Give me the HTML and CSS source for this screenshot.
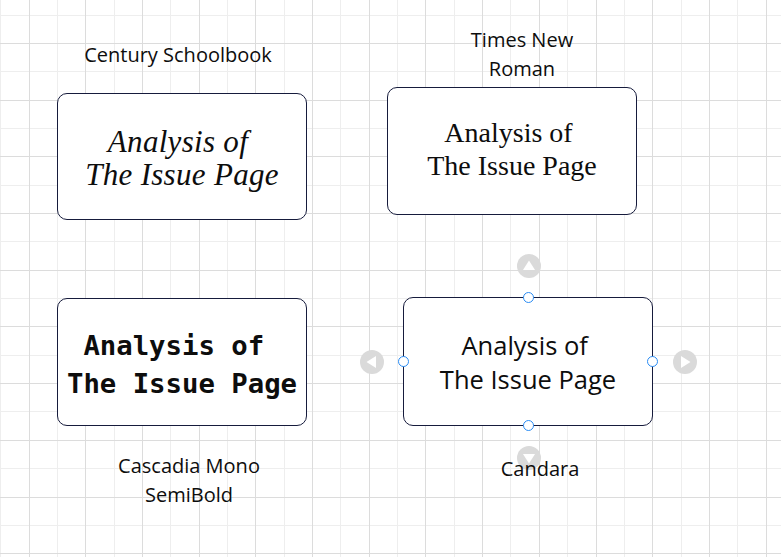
FILE: index.html
```html
<!DOCTYPE html>
<html lang="en">
<head>
<meta charset="utf-8">
<title>Font samples</title>
<link rel="stylesheet" href="styles.css">
</head>
<body>
<div class="canvas">
  <svg class="grid" width="781" height="557" viewBox="0 0 781 557">
    <path class="minor" d="M0.5 0V557M57.5 0V557M114.5 0V557M170.5 0V557M227.5 0V557M284.5 0V557M340.5 0V557M397.5 0V557M454.5 0V557M510.5 0V557M567.5 0V557M624.5 0V557M681.5 0V557M737.5 0V557M0 15.5H781M0 71.5H781M0 128.5H781M0 185.5H781M0 241.5H781M0 298.5H781M0 355.5H781M0 411.5H781M0 468.5H781M0 525.5H781"/>
    <path class="major" d="M29.5 0V557M85.5 0V557M142.5 0V557M199.5 0V557M255.5 0V557M312.5 0V557M369.5 0V557M425.5 0V557M482.5 0V557M539.5 0V557M596.5 0V557M652.5 0V557M709.5 0V557M766.5 0V557M0 43.5H781M0 100.5H781M0 156.5H781M0 213.5H781M0 270.5H781M0 326.5H781M0 383.5H781M0 440.5H781M0 497.5H781M0 553.5H781"/>
  </svg>

  <div class="label label-century">Century Schoolbook</div>
  <div class="label label-times">Times New<br>Roman</div>
  <div class="label label-cascadia">Cascadia Mono<br>SemiBold</div>

  <div class="node node-century"><div class="txt">Analysis of&nbsp;<br>The Issue Page</div></div>
  <div class="node node-times"><div class="txt">Analysis of&nbsp;<br>The Issue Page</div></div>
  <div class="node node-cascadia"><div class="txt">Analysis of&nbsp;<br>The Issue Page</div></div>
  <div class="node node-candara"><div class="txt">Analysis of&nbsp;<br>The Issue Page</div></div>

  <svg class="arrow arrow-up" width="24" height="24" viewBox="0 0 24 24"><circle cx="12" cy="12" r="12"/><path d="M12 6.5L18 16H6Z"/></svg>
  <svg class="arrow arrow-down" width="24" height="24" viewBox="0 0 24 24"><circle cx="12" cy="12" r="12"/><path d="M12 17.5L18 8H6Z"/></svg>
  <svg class="arrow arrow-left" width="24" height="24" viewBox="0 0 24 24"><circle cx="12" cy="12" r="12"/><path d="M6.5 12L16 6V18Z"/></svg>
  <svg class="arrow arrow-right" width="24" height="24" viewBox="0 0 24 24"><circle cx="12" cy="12" r="12"/><path d="M17.5 12L8 6V18Z"/></svg>

  <span class="handle handle-top"></span>
  <span class="handle handle-bottom"></span>
  <span class="handle handle-left"></span>
  <span class="handle handle-right"></span>

  <div class="label label-candara">Candara</div>
</div>
</body>
</html>
```
FILE: styles.css
```css
html, body {
  margin: 0;
  padding: 0;
  background: #ffffff;
}

.canvas {
  position: relative;
  width: 781px;
  height: 557px;
  overflow: hidden;
  background: #ffffff;
}

.grid {
  position: absolute;
  left: 0;
  top: 0;
}

.grid path {
  fill: none;
  stroke-width: 1;
  shape-rendering: crispEdges;
}

.grid .minor { stroke: #eeeeee; }
.grid .major { stroke: #dcdcdc; }

.label {
  position: absolute;
  width: 240px;
  text-align: center;
  font-family: "Open Sans", "Noto Sans", sans-serif;
  font-size: 20px;
  line-height: 29.4px;
  color: #0d0d0d;
}

.label-century { left: 58px; top: 40px; }
.label-times { left: 402px; top: 25px; }
.label-cascadia { left: 69px; top: 451px; }
.label-candara { left: 420px; top: 454px; }

.node {
  position: absolute;
  box-sizing: border-box;
  width: 250px;
  height: 127px;
  border: 1px solid #161b3c;
  border-radius: 10px;
  background: #ffffff;
  display: flex;
  align-items: center;
  justify-content: center;
  text-align: center;
  color: #0d0d0d;
  white-space: nowrap;
}

.node-century { left: 57px; top: 93px; }
.node-times { left: 387px; top: 87px; height: 128px; }
.node-cascadia { left: 57px; top: 298px; height: 128px; }
.node-candara { left: 403px; top: 297px; height: 129px; }

.node-century .txt {
  font-family: "Liberation Serif", "Times New Roman", serif;
  font-style: italic;
  font-size: 31px;
  line-height: 33px;
  letter-spacing: 0.3px;
  padding-top: 2px;
}

.node-times .txt {
  font-family: "Liberation Serif", "Times New Roman", serif;
  font-size: 28px;
  line-height: 32.5px;
  padding-bottom: 3px;
}

.node-cascadia .txt {
  font-family: "DejaVu Sans Mono", "Liberation Mono", monospace;
  font-weight: bold;
  font-size: 27.3px;
  line-height: 38px;
  padding-top: 5px;
}

.node-candara .txt {
  font-family: "Open Sans", "Noto Sans", sans-serif;
  font-size: 25.5px;
  line-height: 34px;
}

.arrow {
  position: absolute;
}

.arrow circle { fill: #dadada; }
.arrow path { fill: #ffffff; }

.arrow-up { left: 517px; top: 254px; }
.arrow-down { left: 517px; top: 446px; }
.arrow-left { left: 360px; top: 350px; }
.arrow-right { left: 673px; top: 350px; }

.handle {
  position: absolute;
  box-sizing: border-box;
  width: 11px;
  height: 11px;
  border: 1px solid #2a8cf4;
  border-radius: 50%;
  background: #ffffff;
}

.handle-top { left: 523px; top: 292px; }
.handle-bottom { left: 523px; top: 420px; }
.handle-left { left: 398px; top: 356px; }
.handle-right { left: 647px; top: 356px; }
```
